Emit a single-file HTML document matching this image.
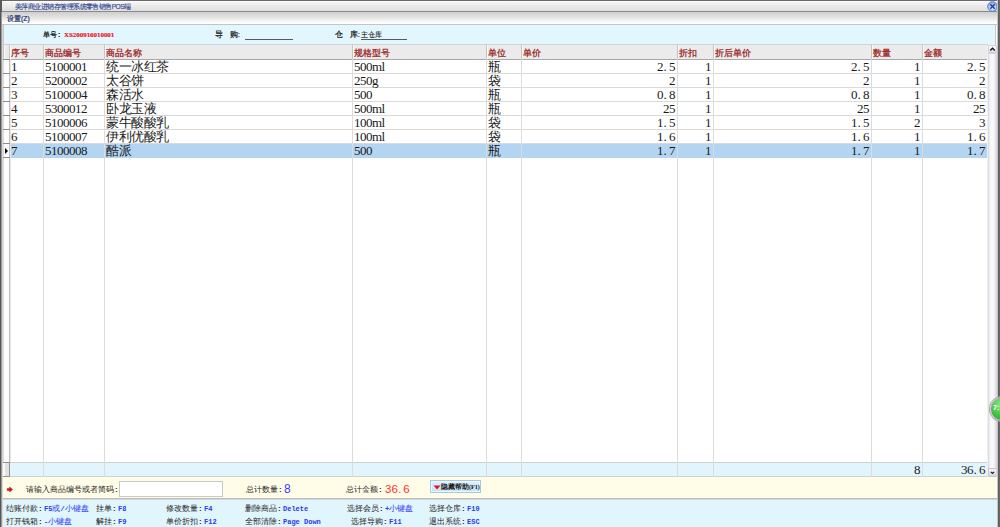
<!DOCTYPE html><html><head><meta charset="utf-8"><style>
*{margin:0;padding:0;box-sizing:border-box}
html,body{width:1000px;height:527px;overflow:hidden;background:#fff;font-family:"Liberation Sans",sans-serif}
.a{position:absolute}
i{font-style:normal}
#lb{left:0;top:12px;width:2px;height:515px;background:linear-gradient(90deg,#565656 50%,#9a9a9a 50%)}
#lb2{display:none}
#rb{left:997px;top:0;width:3px;height:527px;background:linear-gradient(90deg,#c4c4c4,#c4c4c4 33%,#5c5c5c 34%,#6a6a6a)}
#tt{left:0;top:0;width:1000px;height:12px;background:linear-gradient(#ffffff,#f4f4f4 15%,#dedede);border-top:1px solid #6a6a6a;border-bottom:1px solid #8a8a8a}
#title{left:15px;top:1.5px;font-size:6.6px;letter-spacing:-0.55px;line-height:10px;color:#34488f;-webkit-text-stroke:0.15px #34488f;white-space:nowrap}
#close{left:987px;top:1px;width:10px;height:10px;border-radius:50%;background:radial-gradient(circle at 50% 70%,#bcd6f8,#6a8ed8 70%,#4a6cc0);}
#mb{left:2px;top:12px;width:995px;height:13px;background:linear-gradient(#cecece,#e6e6e6 50%,#ffffff 90%);border-bottom:1px solid #c4c4c4}
#menu{left:7px;top:13px;font-size:6.8px;line-height:11px;color:#1c2c70;-webkit-text-stroke:0.2px #1c2c70;white-space:nowrap}
#info{left:3px;top:25px;width:993px;height:20px;background:#e2f7fd;border-left:1px solid #c8c8c8;border-right:1px solid #c8c8c8}
.lab{font-size:8px;line-height:10px;color:#111;font-weight:normal;white-space:nowrap;-webkit-text-stroke:0.2px #111}
#grid{left:3px;top:45px;width:984px;height:432px;background:#fff}
.hd{top:44px;height:16px;background:#ebebeb;border-top:1px solid #d0d4d8;border-bottom:1px solid #a8a8a8}
.ht{top:46.5px;font-size:8.5px;line-height:13px;color:#9a2020;-webkit-text-stroke:0.25px #9a2020;white-space:nowrap}
.vl{width:1px;background:#dcdcdc}
.hl{height:1px;background:#dadada}
.cell{font-family:"Liberation Serif",serif;font-size:13px;letter-spacing:-0.5px;line-height:14px;color:#1a1a1a;white-space:nowrap}
.dot{display:inline-block;width:6px;text-align:left;padding-left:0.5px}
.sel{background:#b3d5f2}
#foot{left:9px;top:462px;width:978px;height:15px;background:#e1f5fd;border-top:1px solid #d0d0d0;border-bottom:1px solid #d0d0d0}
#sb{left:987px;top:45px;width:10px;height:432px;background:linear-gradient(90deg,#f0f0f0 10%,#d4d4dc 10%,#f4f4f8 30%,#fbfbfd 60%,#e0e0e8 90%)}
#yel{left:2px;top:477px;width:995px;height:22px;background:#fffde8;border-bottom:1px solid #bcbcbc}
#help{left:2px;top:499px;width:995px;height:28px;background:#e1f5fd;border-top:1px solid #d2d6d8}
.ht2{font-size:8px;line-height:10px;color:#1e1e1e;white-space:nowrap}
.col{display:inline-block;width:6px;text-align:left;padding-left:1px;font-weight:bold}
.bl i{font-family:"Liberation Sans",sans-serif;font-size:8px;font-weight:normal}
.bl{color:#2838f8;font-family:"Liberation Mono",monospace;font-size:7px;font-weight:bold}
</style></head><body>
<div class="a" id="tt"></div>
<div class="a" id="title">美萍商业进销存管理系统零售销售POS端</div>
<svg class="a" style="left:987px;top:1px" width="11" height="11" viewBox="0 0 11 11"><defs><radialGradient id="cg" cx="50%" cy="70%" r="60%"><stop offset="0" stop-color="#d8ecff"/><stop offset="1" stop-color="#8fb0ea"/></radialGradient></defs><circle cx="5.5" cy="5.5" r="4.8" fill="url(#cg)" stroke="#5a7cd0" stroke-width="1"/><path d="M3.3 3.3L7.7 7.7M7.7 3.3L3.3 7.7" stroke="#1c3a9a" stroke-width="1.3"/></svg>
<div class="a" id="mb"></div>
<div class="a" id="menu">设置(Z)</div>
<div class="a" id="info"></div>
<div class="a lab" style="left:43px;top:30px;font-size:7px">单号<i class="col" style="width:5px">:</i></div>
<div class="a lab" style="left:64px;top:30px;color:#e8101a;font-family:'Liberation Serif',serif;font-size:7px;font-weight:bold;letter-spacing:-0.05px;-webkit-text-stroke:0.15px #f01018">XS200916010001</div>
<div class="a lab" style="left:215px;top:30px">导&nbsp;&nbsp;&nbsp;购:</div>
<div class="a" style="left:245px;top:39px;width:48px;height:1px;background:#5a5a5a"></div>
<div class="a lab" style="left:335px;top:30px">仓&nbsp;&nbsp;&nbsp;库:</div>
<div class="a lab" style="left:361px;top:30px;font-size:7px;-webkit-text-stroke:0.1px #111">主仓库</div>
<div class="a" style="left:361px;top:39px;width:46px;height:1px;background:#5a5a5a"></div>
<div class="a" id="grid"></div>
<div class="a hd" style="left:3px;width:7px;border-left:1px solid #c4c4c4;border-right:1px solid #c4c4c4;box-shadow:inset 1px 0 0 #fafafa"></div>
<div class="a hd" style="left:9px;width:35px;border-left:1px solid #c4c4c4;border-right:1px solid #c4c4c4;box-shadow:inset 1px 0 0 #fafafa"></div>
<div class="a ht" style="left:11px">序号</div>
<div class="a hd" style="left:43px;width:62px;border-left:1px solid #c4c4c4;border-right:1px solid #c4c4c4;box-shadow:inset 1px 0 0 #fafafa"></div>
<div class="a ht" style="left:45px">商品编号</div>
<div class="a hd" style="left:104px;width:249px;border-left:1px solid #c4c4c4;border-right:1px solid #c4c4c4;box-shadow:inset 1px 0 0 #fafafa"></div>
<div class="a ht" style="left:106px">商品名称</div>
<div class="a hd" style="left:352px;width:135px;border-left:1px solid #c4c4c4;border-right:1px solid #c4c4c4;box-shadow:inset 1px 0 0 #fafafa"></div>
<div class="a ht" style="left:354px">规格型号</div>
<div class="a hd" style="left:486px;width:36px;border-left:1px solid #c4c4c4;border-right:1px solid #c4c4c4;box-shadow:inset 1px 0 0 #fafafa"></div>
<div class="a ht" style="left:488px">单位</div>
<div class="a hd" style="left:521px;width:157px;border-left:1px solid #c4c4c4;border-right:1px solid #c4c4c4;box-shadow:inset 1px 0 0 #fafafa"></div>
<div class="a ht" style="left:523px">单价</div>
<div class="a hd" style="left:677px;width:37px;border-left:1px solid #c4c4c4;border-right:1px solid #c4c4c4;box-shadow:inset 1px 0 0 #fafafa"></div>
<div class="a ht" style="left:679px">折扣</div>
<div class="a hd" style="left:713px;width:159px;border-left:1px solid #c4c4c4;border-right:1px solid #c4c4c4;box-shadow:inset 1px 0 0 #fafafa"></div>
<div class="a ht" style="left:715px">折后单价</div>
<div class="a hd" style="left:871px;width:52px;border-left:1px solid #c4c4c4;border-right:1px solid #c4c4c4;box-shadow:inset 1px 0 0 #fafafa"></div>
<div class="a ht" style="left:873px">数量</div>
<div class="a hd" style="left:922px;width:66px;border-left:1px solid #c4c4c4;border-right:1px solid #c4c4c4;box-shadow:inset 1px 0 0 #fafafa"></div>
<div class="a ht" style="left:924px">金额</div>
<div class="a hl" style="left:3px;top:73px;width:984px"></div>
<div class="a hl" style="left:3px;top:87px;width:984px"></div>
<div class="a hl" style="left:3px;top:101px;width:984px"></div>
<div class="a hl" style="left:3px;top:115px;width:984px"></div>
<div class="a hl" style="left:3px;top:129px;width:984px"></div>
<div class="a hl" style="left:3px;top:143px;width:984px"></div>
<div class="a hl" style="left:3px;top:157px;width:984px"></div>
<div class="a sel" style="left:9px;top:144px;width:978px;height:14px"></div>
<div class="a vl" style="left:9px;top:59px;height:403px"></div>
<div class="a vl" style="left:43px;top:59px;height:403px"></div>
<div class="a vl" style="left:104px;top:59px;height:403px"></div>
<div class="a vl" style="left:352px;top:59px;height:403px"></div>
<div class="a vl" style="left:486px;top:59px;height:403px"></div>
<div class="a vl" style="left:521px;top:59px;height:403px"></div>
<div class="a vl" style="left:677px;top:59px;height:403px"></div>
<div class="a vl" style="left:713px;top:59px;height:403px"></div>
<div class="a vl" style="left:871px;top:59px;height:403px"></div>
<div class="a vl" style="left:922px;top:59px;height:403px"></div>
<div class="a" style="left:3px;top:59px;width:7px;height:403px;background:#fdfdfd;border-left:1px solid #dcdcdc;border-right:1px solid #c0c0c0;box-shadow:1px 0 0 #e6e6e6"></div>
<div class="a" style="left:3px;top:59px;width:7px;height:1px;background:#8c8c8c"></div>
<div class="a" style="left:3px;top:73px;width:7px;height:1px;background:#8c8c8c"></div>
<div class="a" style="left:3px;top:87px;width:7px;height:1px;background:#8c8c8c"></div>
<div class="a" style="left:3px;top:101px;width:7px;height:1px;background:#8c8c8c"></div>
<div class="a" style="left:3px;top:115px;width:7px;height:1px;background:#8c8c8c"></div>
<div class="a" style="left:3px;top:129px;width:7px;height:1px;background:#8c8c8c"></div>
<div class="a" style="left:3px;top:143px;width:7px;height:1px;background:#8c8c8c"></div>
<div class="a" style="left:3px;top:157px;width:7px;height:1px;background:#8c8c8c"></div>
<div class="a" style="left:5px;top:148px;width:0;height:0;border-left:3px solid #000;border-top:3px solid transparent;border-bottom:3px solid transparent"></div>
<div class="a cell" style="left:11px;top:60px">1</div>
<div class="a cell" style="left:45px;top:60px">5100001</div>
<div class="a cell" style="left:106px;top:60px">统一冰红茶</div>
<div class="a cell" style="left:354px;top:60px">500ml</div>
<div class="a cell" style="left:488px;top:60px">瓶</div>
<div class="a cell" style="left:521px;width:154px;top:60px;text-align:right">2<i class="dot">.</i>5</div>
<div class="a cell" style="left:677px;width:34px;top:60px;text-align:right">1</div>
<div class="a cell" style="left:713px;width:156px;top:60px;text-align:right">2<i class="dot">.</i>5</div>
<div class="a cell" style="left:871px;width:49px;top:60px;text-align:right">1</div>
<div class="a cell" style="left:922px;width:63px;top:60px;text-align:right">2<i class="dot">.</i>5</div>
<div class="a cell" style="left:11px;top:74px">2</div>
<div class="a cell" style="left:45px;top:74px">5200002</div>
<div class="a cell" style="left:106px;top:74px">太谷饼</div>
<div class="a cell" style="left:354px;top:74px">250g</div>
<div class="a cell" style="left:488px;top:74px">袋</div>
<div class="a cell" style="left:521px;width:154px;top:74px;text-align:right">2</div>
<div class="a cell" style="left:677px;width:34px;top:74px;text-align:right">1</div>
<div class="a cell" style="left:713px;width:156px;top:74px;text-align:right">2</div>
<div class="a cell" style="left:871px;width:49px;top:74px;text-align:right">1</div>
<div class="a cell" style="left:922px;width:63px;top:74px;text-align:right">2</div>
<div class="a cell" style="left:11px;top:88px">3</div>
<div class="a cell" style="left:45px;top:88px">5100004</div>
<div class="a cell" style="left:106px;top:88px">森活水</div>
<div class="a cell" style="left:354px;top:88px">500</div>
<div class="a cell" style="left:488px;top:88px">瓶</div>
<div class="a cell" style="left:521px;width:154px;top:88px;text-align:right">0<i class="dot">.</i>8</div>
<div class="a cell" style="left:677px;width:34px;top:88px;text-align:right">1</div>
<div class="a cell" style="left:713px;width:156px;top:88px;text-align:right">0<i class="dot">.</i>8</div>
<div class="a cell" style="left:871px;width:49px;top:88px;text-align:right">1</div>
<div class="a cell" style="left:922px;width:63px;top:88px;text-align:right">0<i class="dot">.</i>8</div>
<div class="a cell" style="left:11px;top:102px">4</div>
<div class="a cell" style="left:45px;top:102px">5300012</div>
<div class="a cell" style="left:106px;top:102px">卧龙玉液</div>
<div class="a cell" style="left:354px;top:102px">500ml</div>
<div class="a cell" style="left:488px;top:102px">瓶</div>
<div class="a cell" style="left:521px;width:154px;top:102px;text-align:right">25</div>
<div class="a cell" style="left:677px;width:34px;top:102px;text-align:right">1</div>
<div class="a cell" style="left:713px;width:156px;top:102px;text-align:right">25</div>
<div class="a cell" style="left:871px;width:49px;top:102px;text-align:right">1</div>
<div class="a cell" style="left:922px;width:63px;top:102px;text-align:right">25</div>
<div class="a cell" style="left:11px;top:116px">5</div>
<div class="a cell" style="left:45px;top:116px">5100006</div>
<div class="a cell" style="left:106px;top:116px">蒙牛酸酸乳</div>
<div class="a cell" style="left:354px;top:116px">100ml</div>
<div class="a cell" style="left:488px;top:116px">袋</div>
<div class="a cell" style="left:521px;width:154px;top:116px;text-align:right">1<i class="dot">.</i>5</div>
<div class="a cell" style="left:677px;width:34px;top:116px;text-align:right">1</div>
<div class="a cell" style="left:713px;width:156px;top:116px;text-align:right">1<i class="dot">.</i>5</div>
<div class="a cell" style="left:871px;width:49px;top:116px;text-align:right">2</div>
<div class="a cell" style="left:922px;width:63px;top:116px;text-align:right">3</div>
<div class="a cell" style="left:11px;top:130px">6</div>
<div class="a cell" style="left:45px;top:130px">5100007</div>
<div class="a cell" style="left:106px;top:130px">伊利优酸乳</div>
<div class="a cell" style="left:354px;top:130px">100ml</div>
<div class="a cell" style="left:488px;top:130px">袋</div>
<div class="a cell" style="left:521px;width:154px;top:130px;text-align:right">1<i class="dot">.</i>6</div>
<div class="a cell" style="left:677px;width:34px;top:130px;text-align:right">1</div>
<div class="a cell" style="left:713px;width:156px;top:130px;text-align:right">1<i class="dot">.</i>6</div>
<div class="a cell" style="left:871px;width:49px;top:130px;text-align:right">1</div>
<div class="a cell" style="left:922px;width:63px;top:130px;text-align:right">1<i class="dot">.</i>6</div>
<div class="a cell" style="left:11px;top:144px">7</div>
<div class="a cell" style="left:45px;top:144px">5100008</div>
<div class="a cell" style="left:106px;top:144px">酷派</div>
<div class="a cell" style="left:354px;top:144px">500</div>
<div class="a cell" style="left:488px;top:144px">瓶</div>
<div class="a cell" style="left:521px;width:154px;top:144px;text-align:right">1<i class="dot">.</i>7</div>
<div class="a cell" style="left:677px;width:34px;top:144px;text-align:right">1</div>
<div class="a cell" style="left:713px;width:156px;top:144px;text-align:right">1<i class="dot">.</i>7</div>
<div class="a cell" style="left:871px;width:49px;top:144px;text-align:right">1</div>
<div class="a cell" style="left:922px;width:63px;top:144px;text-align:right">1<i class="dot">.</i>7</div>
<div class="a" id="foot"></div>
<div class="a" style="left:3px;top:462px;width:7px;height:15px;background:linear-gradient(90deg,#fafafa 30%,#e2e2e2 30%);border-top:1px solid #909090;border-bottom:1px solid #909090;border-right:1px solid #909090"></div>
<div class="a vl" style="left:43px;top:462px;height:15px"></div>
<div class="a vl" style="left:104px;top:462px;height:15px"></div>
<div class="a vl" style="left:352px;top:462px;height:15px"></div>
<div class="a vl" style="left:486px;top:462px;height:15px"></div>
<div class="a vl" style="left:521px;top:462px;height:15px"></div>
<div class="a vl" style="left:677px;top:462px;height:15px"></div>
<div class="a vl" style="left:713px;top:462px;height:15px"></div>
<div class="a vl" style="left:871px;top:462px;height:15px"></div>
<div class="a vl" style="left:922px;top:462px;height:15px"></div>
<div class="a cell" style="left:871px;width:49px;top:463px;text-align:right">8</div>
<div class="a cell" style="left:922px;width:63px;top:463px;text-align:right">36<i class="dot">.</i>6</div>
<div class="a" id="sb"></div>
<div class="a" style="left:988px;top:45px;width:9px;height:9px;background:linear-gradient(#fbfbfd,#f0f0f4 60%,#c8c8d8);border:1px solid #d4d4dc;"><svg width="7" height="7" style="position:absolute;left:0;top:0"><path d="M1.2 4.6L3.5 2.3L5.8 4.6" fill="none" stroke="#111" stroke-width="1.4"/></svg></div>
<div class="a" style="left:988px;top:468px;width:9px;height:9px;background:linear-gradient(#f4f4f8,#d8d8e4);border:1px solid #c4c4d0"><svg width="7" height="7" style="position:absolute;left:0;top:0"><path d="M1.8 2.8L3.5 4.5L5.2 2.8" fill="none" stroke="#222" stroke-width="1.2"/></svg></div>
<div class="a" id="yel"></div>
<svg class="a" style="left:6px;top:486px" width="8" height="7" viewBox="0 0 8 7"><path d="M1.2 2.4H3.6V1L6.6 3.5L3.6 6V4.6H1.2Z" fill="#e81010" stroke="#5a1010" stroke-width="0.4"/></svg>
<div class="a ht2" style="left:26px;top:485px">请输入商品编号或者简码<i class="col">:</i></div>
<div class="a" style="left:119px;top:481px;width:104px;height:16px;background:#fff;border:1px solid #c8c8c8"></div>
<div class="a ht2" style="left:246px;top:485px">总计数量<i class="col">:</i></div>
<div class="a" style="left:284px;top:481px;font-family:'Liberation Sans',sans-serif;font-size:12px;line-height:16px;color:#3a3aff">8</div>
<div class="a ht2" style="left:346px;top:485px">总计金额<i class="col">:</i></div>
<div class="a" style="left:385px;top:481px;font-family:'Liberation Sans',sans-serif;font-size:11.5px;line-height:16px;color:#ff3030">36<i class="dot" style="width:5.5px">.</i>6</div>
<div class="a" style="left:430px;top:480px;width:51px;height:13px;background:linear-gradient(#dff0fc,#c4e2f8);border:1px solid #a4c8e4;box-shadow:inset 0 0 0 1px #eef8ff"></div>
<svg class="a" style="left:433px;top:485px" width="8" height="5"><path d="M0.5 0.5H7.5L4 4.5Z" fill="#e01818"/></svg>
<div class="a" style="left:441px;top:481px;font-size:6.5px;line-height:11px;color:#111;font-weight:bold;white-space:nowrap">隐藏帮助<span style="font-family:'Liberation Serif',serif;font-size:6px">(F1)</span></div>
<div class="a" id="help"></div>
<div class="a ht2" style="left:6px;top:504px">结账付款<i class="col">:</i><span class="bl">F5<i>或</i>/<i>小</i><i>键</i><i>盘</i></span></div>
<div class="a ht2" style="left:96px;top:504px">挂单<i class="col">:</i><span class="bl">F8</span></div>
<div class="a ht2" style="left:166px;top:504px">修改数量<i class="col">:</i><span class="bl">F4</span></div>
<div class="a ht2" style="left:245px;top:504px">删除商品<i class="col">:</i><span class="bl">Delete</span></div>
<div class="a ht2" style="left:347px;top:504px">选择会员<i class="col">:</i><span class="bl">+<i>小</i><i>键</i><i>盘</i></span></div>
<div class="a ht2" style="left:429px;top:504px">选择仓库<i class="col">:</i><span class="bl">F10</span></div>
<div class="a ht2" style="left:6px;top:517px">打开钱箱<i class="col">:</i><span class="bl">-<i>小</i><i>键</i><i>盘</i></span></div>
<div class="a ht2" style="left:96px;top:517px">解挂<i class="col">:</i><span class="bl">F9</span></div>
<div class="a ht2" style="left:166px;top:517px">单价折扣<i class="col">:</i><span class="bl">F12</span></div>
<div class="a ht2" style="left:245px;top:517px">全部清除<i class="col">:</i><span class="bl">Page Down</span></div>
<div class="a ht2" style="left:351px;top:517px">选择导购<i class="col">:</i><span class="bl">F11</span></div>
<div class="a ht2" style="left:429px;top:517px">退出系统<i class="col">:</i><span class="bl">ESC</span></div>
<div class="a" id="lb"></div><div class="a" id="lb2"></div><div class="a" id="rb"></div>
<div class="a" style="left:0;top:0;width:2px;height:12px;background:#5a5a5a"></div>
<div class="a" style="left:2px;top:25px;width:1px;height:502px;background:#d8d8d8"></div>
<div class="a" style="left:996px;top:45px;width:1px;height:432px;background:#d8d8dc"></div>
<div class="a" style="left:990px;top:397px;width:24px;height:24px;border-radius:50%;background:radial-gradient(circle at 45% 30%,#8ae88a,#3cc03c 60%,#22a022);border:1px solid #d8b8d0;box-shadow:0 0 0 1px #b0a0b8"></div>
<div class="a" style="left:993px;top:403px;font-size:7px;line-height:10px;color:#fff;font-weight:bold">7:</div>
</body></html>
